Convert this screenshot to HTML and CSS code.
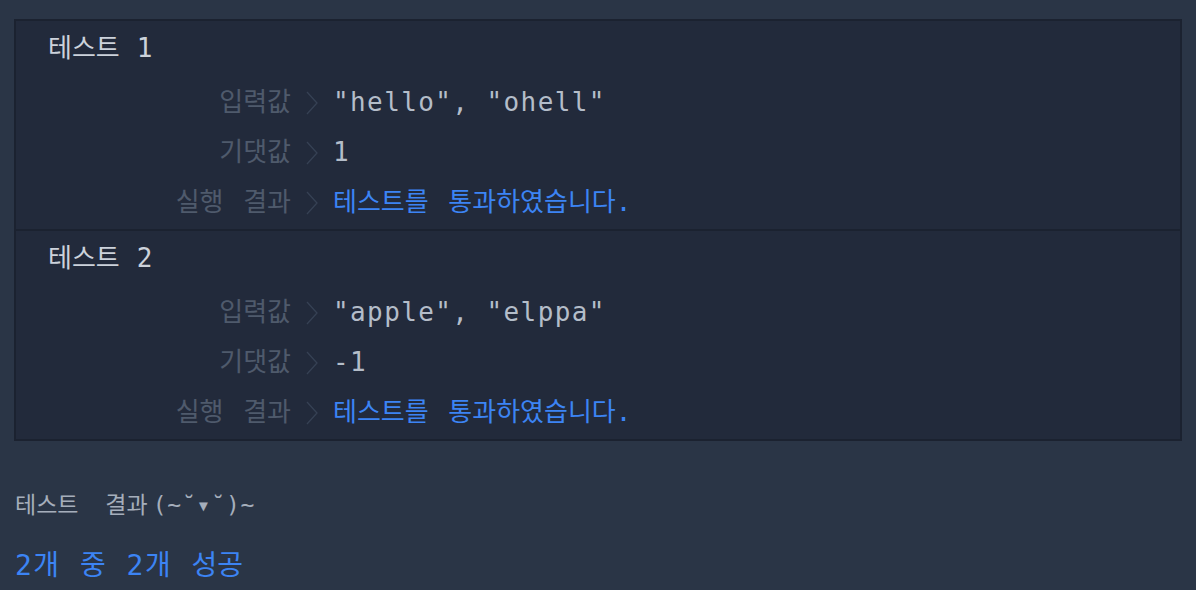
FILE: index.html
```html
<!DOCTYPE html>
<html lang="ko">
<head>
<meta charset="utf-8">
<title>테스트 결과</title>
<link rel="stylesheet" href="styles.css">
</head>
<body>
<div class="page">
  <div class="results">
    <section class="case">
      <div class="case-title">테스트<span class="l"> 1</span></div>
      <div class="row">
        <div class="label">입력값</div>
        <div class="sep"><svg width="12" height="24" viewBox="0 0 12 24"><polyline points="1,1 11,12 1,23"/></svg></div>
        <div class="value l">"hello", "ohell"</div>
      </div>
      <div class="row">
        <div class="label">기댓값</div>
        <div class="sep"><svg width="12" height="24" viewBox="0 0 12 24"><polyline points="1,1 11,12 1,23"/></svg></div>
        <div class="value l">1</div>
      </div>
      <div class="row">
        <div class="label">실행 결과</div>
        <div class="sep"><svg width="12" height="24" viewBox="0 0 12 24"><polyline points="1,1 11,12 1,23"/></svg></div>
        <div class="value pass">테스트를 통과하였습니다<span class="l">.</span></div>
      </div>
    </section>
    <section class="case">
      <div class="case-title">테스트<span class="l"> 2</span></div>
      <div class="row">
        <div class="label">입력값</div>
        <div class="sep"><svg width="12" height="24" viewBox="0 0 12 24"><polyline points="1,1 11,12 1,23"/></svg></div>
        <div class="value l">"apple", "elppa"</div>
      </div>
      <div class="row">
        <div class="label">기댓값</div>
        <div class="sep"><svg width="12" height="24" viewBox="0 0 12 24"><polyline points="1,1 11,12 1,23"/></svg></div>
        <div class="value l">-1</div>
      </div>
      <div class="row">
        <div class="label">실행 결과</div>
        <div class="sep"><svg width="12" height="24" viewBox="0 0 12 24"><polyline points="1,1 11,12 1,23"/></svg></div>
        <div class="value pass">테스트를 통과하였습니다<span class="l">.</span></div>
      </div>
    </section>
  </div>
  <div class="summary-title">테스트 결과<span class="l kao">(~˘▾˘)~</span></div>
  <div class="summary"><span class="l">2</span>개 중 <span class="l">2</span>개 성공</div>
</div>
</body>
</html>
```

FILE: styles.css
```css
* { box-sizing: border-box; }
html, body {
  margin: 0;
  padding: 0;
  background: #2a3546;
}
body {
  font-family: "DejaVu Sans Mono", "Noto Sans CJK KR", monospace;
  letter-spacing: 0;
  word-spacing: 4px;
}
.page {
  padding: 19px 14px 0 14px;
}
.l {
  letter-spacing: 1.4px;
  word-spacing: 0;
}
.results {
  background: #222a3b;
  border: 2px solid #1b2230;
}
.case {
  padding: 12px 0 2px 0;
  font-size: 26px;
}
.case + .case {
  border-top: 2px solid #1b2230;
}
.case-title {
  line-height: 30px;
  height: 30px;
  padding-left: 32px;
  color: #ccd2db;
  margin-bottom: 14px;
}
.row {
  display: grid;
  grid-template-columns: 275px 42px 1fr;
  height: 50px;
  line-height: 50px;
  align-items: center;
}
.label {
  text-align: right;
  color: #4f5a6c;
}
.sep {
  display: flex;
  align-items: center;
  padding-left: 15px;
  height: 50px;
}
.sep svg {
  display: block;
  margin-top: 2px;
}
.sep polyline {
  fill: none;
  stroke: #364154;
  stroke-width: 1.3;
}
.value {
  color: #b4bdc9;
  white-space: pre;
}
.value.pass {
  color: #3c84f4;
}
.summary-title {
  margin-top: 49px;
  font-size: 23px;
  line-height: 30px;
  color: #a5aebb;
  padding-left: 1px;
  word-spacing: 13px;
}
.summary-title .kao {
  letter-spacing: 0.8px;
  margin-left: 5px;
}
.summary {
  margin-top: 26px;
  font-size: 28px;
  line-height: 40px;
  color: #3c84f4;
  padding-left: 1px;
}
.summary .l {
  letter-spacing: 1.5px;
}
```
